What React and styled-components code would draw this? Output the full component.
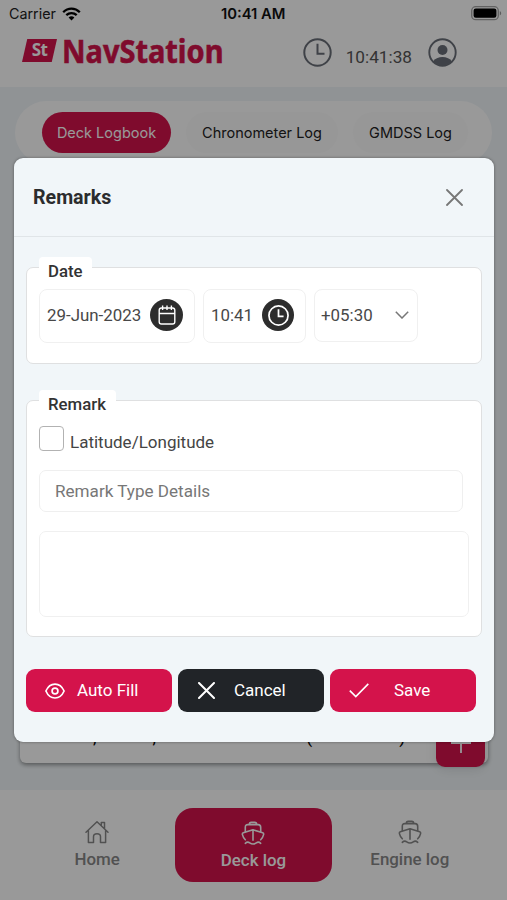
import React, { useState } from 'react';
import styled, { createGlobalStyle } from 'styled-components';

const GlobalStyle = createGlobalStyle`
  * {
    box-sizing: border-box;
  }
  body {
    margin: 0;
    font-family: Roboto, 'Liberation Sans', sans-serif;
    overflow: hidden;
  }
  button, input, textarea {
    font: inherit;
    border: 0;
    background: none;
    padding: 0;
  }
`;

const CRIMSON = '#d4134b';

const WifiIcon = () => (
  <svg width="19" height="14" viewBox="0 0 19 14">
    <g fill="none" stroke="#000" strokeWidth="2.3">
      <path d="M1.2 5.2C6 .4 13 .4 17.8 5.2" />
      <path d="M4.3 8.2c3-2.8 7.4-2.8 10.4 0" />
    </g>
    <path d="M6.6 10.4c1.7-1.5 4.1-1.5 5.8 0L9.5 13.4z" />
  </svg>
);

const BatteryIcon = () => (
  <svg width="31" height="15" viewBox="0 0 31 15">
    <rect x=".7" y=".7" width="26.6" height="13" rx="4" fill="none" stroke="#a4a4a4" strokeWidth="1.3" />
    <rect x="2.6" y="2.6" width="22.8" height="9.2" rx="2.2" />
    <path d="M28.8 5c1.9.8 1.9 3.6 0 4.4z" fill="#999" />
  </svg>
);

const ClockIcon = ({ size = 29, stroke = 2 }) => (
  <svg width={size} height={size} viewBox="0 0 29 29" fill="none" stroke="currentColor" strokeWidth={stroke}>
    <circle cx="14.5" cy="14.5" r="13.2" />
    <path d="M14.5 5.8v10h7" />
  </svg>
);

const UserIcon = () => (
  <svg width="29" height="29" viewBox="0 0 29 29">
    <circle cx="14.5" cy="14.5" r="13.2" fill="none" stroke="currentColor" strokeWidth="1.9" />
    <circle cx="14.5" cy="12" r="5" fill="currentColor" />
    <path d="M5 23.5c3.4-6 15.6-6 19 0-5 5.5-14 5.5-19 0z" fill="currentColor" />
  </svg>
);

const CalendarIcon = () => (
  <svg width="20" height="22" viewBox="0 0 20 22" fill="none" stroke="#fff" strokeWidth="1.4">
    <rect x="2.2" y="4" width="15.6" height="16" rx="2.2" />
    <path d="M2 9.5h16M5.6 1.5V6M10 1.5V6M14.4 1.5V6" />
  </svg>
);

const CrossIcon = ({ size = 17, stroke = 1.8 }) => (
  <svg width={size} height={size} viewBox="0 0 17 17" fill="none" stroke="currentColor" strokeWidth={stroke}>
    <path d="M1 1l15 15M16 1L1 16" strokeLinecap="round" />
  </svg>
);

const EyeIcon = () => (
  <svg width="20" height="16" viewBox="0 0 20 16" fill="none" stroke="#fff" strokeWidth="1.7">
    <path d="M.9 8C5-1.3 15-1.3 19.1 8 15 17.3 5 17.3.9 8z" strokeLinejoin="round" />
    <circle cx="10" cy="8" r="2.9" />
  </svg>
);

const CheckIcon = () => (
  <svg width="20" height="15" viewBox="0 0 20 15" fill="none" stroke="#fff" strokeWidth="1.6">
    <path d="M.8 7.6l6 6L19.3.9" />
  </svg>
);

const ChevronIcon = () => (
  <svg width="14" height="8" viewBox="0 0 14 8" fill="none" stroke="#777" strokeWidth="1.5">
    <path d="M.8.8L7 7 13.2.8" />
  </svg>
);

const PlusIcon = () => (
  <svg width="20" height="20" viewBox="0 0 20 20" stroke="#fff" strokeWidth="1.8">
    <path d="M0 10h20M10 0v20" />
  </svg>
);

const HomeIcon = () => (
  <svg
    width="24"
    height="24"
    viewBox="0 0 24 24"
    fill="none"
    stroke="currentColor"
    strokeWidth="1.5"
    strokeLinejoin="round"
    strokeLinecap="round"
  >
    <path d="M1 12.3L12 1.8l11 10.5M3.4 10.5v12h5.1v-5.7c0-4 7-4 7 0v5.700h5.1v-12M16.300 5.300V2.500h3.200v6" />
  </svg>
);

const ShipIcon = () => (
  <svg
    width="24"
    height="24"
    viewBox="0 0 24 24"
    fill="none"
    stroke="currentColor"
    strokeWidth="1.6"
    strokeLinejoin="round"
    strokeLinecap="round"
  >
    <path d="M8.300 3.600c0-1.500.6-2.200 2-2.200h3.400c1.400 0 2 .7 2 2.200M4.300 10.600V6.400c0-1.800.8-2.800 2.600-2.800h10.200c1.800 0 2.600 1 2.600 2.800v4.200" />
    <path d="M4.300 18.800c-1.500-1.500-2.400-3.200-2.900-5.200-.2-.9.100-1.500.9-1.800L12 8.800l9.700 3c.8.3 1.100.9.900 1.800-.5 2-1.400 3.700-2.900 5.200M12 8.800v10.400" />
    <path d="M4.300 22.300c1.600-1.500 3-1.500 4.400-.5 2 1.500 4.600 1.500 6.600 0 1.400-1 2.800-1 4.400.5" />
  </svg>
);

const App = () => {
  const [details, setDetails] = useState('');
  const [text, setText] = useState('');

  return (
    <Screen>
      <GlobalStyle />
      <StatusBar>
        <Carrier>Carrier <WifiIcon /></Carrier>
        <StatusTime>10:41 AM</StatusTime>
        <BatteryIcon />
      </StatusBar>
      <Header>
        <Logo>
          <LogoBadge>St</LogoBadge>
          <LogoText>NavStation</LogoText>
        </Logo>
        <HeaderTools>
          <ClockIcon />
          <HeaderTime>10:41:38</HeaderTime>
          <UserIcon />
        </HeaderTools>
      </Header>
      <Content>
        <Tabs>
          <Tab $width={129} $active>Deck Logbook</Tab>
          <Tab $width={152}>Chronometer Log</Tab>
          <Tab $width={115}>GMDSS Log</Tab>
        </Tabs>
        <LogCard>
          <LogText>
            <LogPart $indent={73}>,</LogPart>
            <LogPart $indent={56}>,</LogPart>
            <LogPart $indent={150}>(</LogPart>
            <LogPart $indent={87}>)</LogPart>
          </LogText>
        </LogCard>
        <AddButton><PlusIcon /></AddButton>
      </Content>
      <BottomNav>
        <NavItem><HomeIcon />Home</NavItem>
        <NavItem $active><ShipIcon />Deck log</NavItem>
        <NavItem><ShipIcon />Engine log</NavItem>
      </BottomNav>

      <Overlay>
        <Modal>
          <ModalHeader>
            <ModalTitle>Remarks</ModalTitle>
            <CloseButton><CrossIcon /></CloseButton>
          </ModalHeader>
          <ModalBody>
            <Group $height={97}>
              <Legend $width={53}>Date</Legend>
              <DateRow>
                <Field $width={156}>
                  29-Jun-2023
                  <RoundIcon $size={33}><CalendarIcon /></RoundIcon>
                </Field>
                <Field $width={103}>
                  10:41
                  <RoundIcon $size={32}><ClockIcon size={21} stroke={2.4} /></RoundIcon>
                </Field>
                <Field $width={104} $select>
                  +05:30
                  <ChevronIcon />
                </Field>
              </DateRow>
            </Group>
            <Group $height={237}>
              <Legend $width={77}>Remark</Legend>
              <CheckRow>
                <CheckBox />
                <span>Latitude/Longitude</span>
              </CheckRow>
              <DetailsInput
                placeholder="Remark Type Details"
                value={details}
                onChange={(e) => setDetails(e.target.value)}
              />
              <RemarkArea value={text} onChange={(e) => setText(e.target.value)} />
            </Group>
            <Actions>
              <ActionButton><EyeIcon /><Label $gap={12}>Auto Fill</Label></ActionButton>
              <ActionButton $dark><CrossIcon stroke={2} /><Label $gap={19}>Cancel</Label></ActionButton>
              <ActionButton><CheckIcon /><Label $gap={25}>Save</Label></ActionButton>
            </Actions>
          </ModalBody>
        </Modal>
      </Overlay>
    </Screen>
  );
};

const Screen = styled.div`
  position: relative;
  width: 507px;
  height: 900px;
  display: flex;
  flex-direction: column;
  overflow: hidden;
  background: #fff;
`;

const StatusBar = styled.div`
  height: 27px;
  padding: 0 5px 0 9px;
  display: grid;
  grid-template-columns: 212px 1fr auto;
  align-items: center;
  font-family: Inter, sans-serif;
  font-size: 14.3px;
  color: #222;
`;

const Carrier = styled.div`
  display: flex;
  align-items: center;
  gap: 6px;
`;

const StatusTime = styled.div`
  font-weight: 600;
  font-size: 14.8px;
  color: #111;
`;

const Header = styled.div`
  height: 60px;
  padding: 0 50px 0 22px;
  display: flex;
  justify-content: space-between;
`;

const Logo = styled.div`
  display: flex;
  align-items: flex-start;
  gap: 5px;
  padding-top: 12px;
  color: ${CRIMSON};
`;

const LogoBadge = styled.div`
  width: 35px;
  height: 23px;
  background: ${CRIMSON};
  clip-path: polygon(15% 0, 100% 0, 85% 100%, 0 100%);
  color: #fff;
  font: 700 17px/22px 'Noto Sans', sans-serif;
  letter-spacing: -0.5px;
  text-align: center;
`;

const LogoText = styled.div`
  width: 163px;
  font: 700 32px/24px 'Noto Sans', sans-serif;
  white-space: nowrap;
  -webkit-text-stroke: 0.6px ${CRIMSON};
  transform: scaleX(0.905);
  transform-origin: left;
`;

const HeaderTools = styled.div`
  display: flex;
  align-items: flex-start;
  padding-top: 11px;
  color: #6a6f78;
`;

const HeaderTime = styled.div`
  margin: 8px 16px 0 14px;
  font-size: 17.2px;
  line-height: 22px;
  color: #555;
`;

const Content = styled.div`
  position: relative;
  height: 703px;
  padding: 14px 15px 0;
  display: flex;
  flex-direction: column;
  justify-content: space-between;
  background: #f1f6f9;
`;

const Tabs = styled.div`
  height: 63px;
  padding: 0 24px 0 27px;
  display: flex;
  align-items: center;
  justify-content: space-between;
  background: #fff;
  border-radius: 32px;
`;

const Tab = styled.div`
  width: ${(p) => p.$width}px;
  height: 41px;
  display: flex;
  align-items: center;
  justify-content: center;
  font: 14.5px Inter, sans-serif;
  border-radius: 21px;
  white-space: nowrap;
  background: ${(p) => (p.$active ? CRIMSON : '#fcfcfc')};
  color: ${(p) => (p.$active ? '#fff' : '#222')};
`;

const LogCard = styled.div`
  height: 60px;
  margin: 0 4px 27px 5px;
  display: flex;
  align-items: flex-end;
  background: #fff;
  border-radius: 6px;
  box-shadow: 0 2px 4px rgba(0, 0, 0, 0.4);
`;

const LogText = styled.div`
  display: flex;
  padding-bottom: 17px;
  font-size: 18px;
  line-height: 18px;
  color: #000;
`;

const LogPart = styled.span`
  padding-left: ${(p) => p.$indent}px;
`;

const AddButton = styled.button`
  position: absolute;
  right: 22px;
  bottom: 23px;
  width: 49px;
  height: 49px;
  display: flex;
  align-items: center;
  justify-content: center;
  background: ${CRIMSON};
  border-radius: 9px;
  box-shadow: 0 3px 12px rgba(0, 0, 0, 0.1);
`;

const BottomNav = styled.div`
  height: 110px;
  padding: 18px 19px 0;
  display: grid;
  grid-template-columns: repeat(3, 1fr);
  background: #fff;
`;

const NavItem = styled.div`
  height: 74px;
  padding-top: ${(p) => (p.$active ? 13 : 12)}px;
  display: flex;
  flex-direction: column;
  align-items: center;
  gap: 4px;
  font-size: 16.9px;
  font-weight: 500;
  line-height: 22px;
  border-radius: 18px;
  background: ${(p) => (p.$active ? CRIMSON : 'transparent')};
  color: ${(p) => (p.$active ? '#fff' : '#888')};
`;

const Overlay = styled.div`
  position: absolute;
  inset: 0;
  padding: 158px 13px 0 14px;
  background: rgba(0, 0, 0, 0.4);
`;

const Modal = styled.div`
  height: 584px;
  background: #f1f6f9;
  border-radius: 9px;
  overflow: hidden;
  box-shadow: 0 0 3px rgba(0, 0, 0, 0.4);
`;

const ModalHeader = styled.div`
  height: 79px;
  padding: 0 31px 0 19px;
  display: flex;
  align-items: center;
  justify-content: space-between;
  border-bottom: 1px solid #e0e5e8;
`;

const ModalTitle = styled.div`
  font-size: 19.6px;
  font-weight: 700;
  color: #2b2c2e;
`;

const CloseButton = styled.button`
  display: flex;
  color: #777;
`;

const ModalBody = styled.div`
  padding: 30px 12px 0;
`;

const Group = styled.div`
  height: ${(p) => p.$height}px;
  margin-bottom: 36px;
  padding: 0 12px;
  background: #fff;
  border: 1px solid #dfe0e1;
  border-radius: 7px;

  & + & {
    margin-bottom: 32px;
  }
`;

const Legend = styled.div`
  width: ${(p) => p.$width}px;
  height: 32px;
  margin-top: -11px;
  padding-left: 9px;
  background: #fff;
  border-radius: 4px;
  font-size: 16.8px;
  font-weight: 500;
  line-height: 29px;
  color: #333;
`;

const DateRow = styled.div`
  display: flex;
  gap: 8px;
`;

const Field = styled.div`
  width: ${(p) => p.$width}px;
  height: ${(p) => (p.$select ? 53 : 54)}px;
  padding: ${(p) => (p.$select ? '0 8px 2px 6px' : '0 11px 2px 7px')};
  display: flex;
  align-items: center;
  justify-content: space-between;
  border: 1px solid #f0f0f0;
  border-radius: 8px;
  font-size: 16.9px;
  white-space: nowrap;
  color: #484848;
`;

const RoundIcon = styled.div`
  width: ${(p) => p.$size}px;
  height: 32px;
  display: flex;
  align-items: center;
  justify-content: center;
  border-radius: 50%;
  background: #2d2d2d;
  color: #fff;
`;

const CheckRow = styled.div`
  height: 27px;
  margin-top: 4px;
  display: flex;
  align-items: flex-start;
  gap: 6px;
  font-size: 17px;
  line-height: 32px;
  color: #444;
`;

const CheckBox = styled.div`
  width: 25px;
  height: 25px;
  border: 1.5px solid #b2b2b2;
  border-radius: 4px;
`;

const DetailsInput = styled.input`
  display: block;
  width: 424px;
  height: 42px;
  margin-top: 17px;
  padding: 0 15px;
  border: 1px solid #efefef;
  border-radius: 7px;
  font-size: 17.1px;

  &::placeholder {
    color: #777;
  }
`;

const RemarkArea = styled.textarea`
  display: block;
  width: 430px;
  height: 86px;
  margin-top: 19px;
  border: 1px solid #f0f0f0;
  border-radius: 7px;
  resize: none;
`;

const Actions = styled.div`
  display: flex;
  gap: 6px;
`;

const ActionButton = styled.button`
  width: 146px;
  height: 43px;
  padding: 0 ${(p) => (p.$dark ? 20 : 19)}px;
  display: flex;
  align-items: center;
  border-radius: 9px;
  background: ${(p) => (p.$dark ? '#212428' : CRIMSON)};
  color: #fff;
  font-size: 17px;
`;

const Label = styled.span`
  margin-left: ${(p) => p.$gap}px;
  padding-bottom: 2px;
`;

export default App;
